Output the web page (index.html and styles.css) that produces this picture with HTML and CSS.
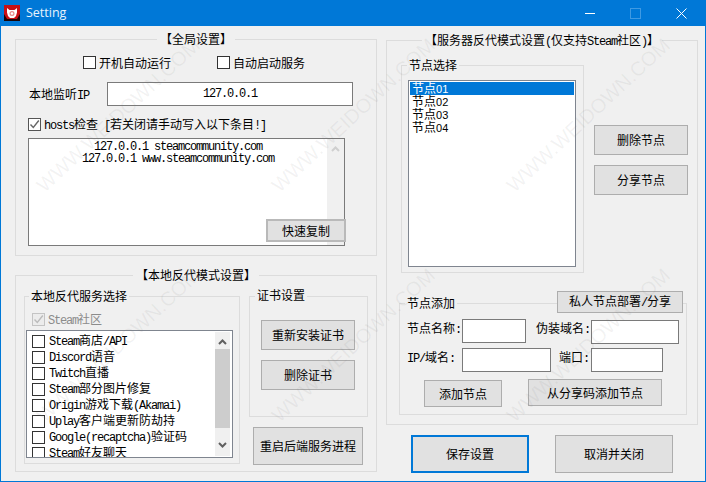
FILE: index.html
```html
<!DOCTYPE html>
<html lang="zh">
<head>
<meta charset="utf-8">
<title>Setting</title>
<link rel="stylesheet" href="styles.css">
</head>
<body>
<div class="window">
  <header class="titlebar">
    <svg class="appicon" viewBox="0 0 16 16" width="16" height="16"><rect width="16" height="16" fill="#c80f14"/><path d="M0 16V9l3 5h10l3-5v7z" fill="#1a0506"/><path d="M3 3l2.500 2h5L13 3v4.500L12 11l-2 2H6l-2-2-1-3.500z" fill="#fff"/><circle cx="8" cy="8.500" r="2.500" fill="#e98a8a"/><circle cx="8" cy="8.500" r="1.200" fill="#fff"/></svg>
    <span class="title">Setting</span>
    <div class="winbtns">
      <svg width="10" height="10" viewBox="0 0 10 10"><path d="M0 5.500h10" stroke="#fff" fill="none"/></svg>
      <svg width="11" height="11" viewBox="0 0 11 11"><rect x=".5" y=".5" width="10" height="10" stroke="#3f9ae3" fill="none"/></svg>
      <svg width="11" height="11" viewBox="0 0 11 11"><path d="M.5.500l10 10M10.500.500l-10 10" stroke="#fff" fill="none"/></svg>
    </div>
  </header>

  <main class="content">
    <div class="col col-left">
      <section class="group g-global">
        <h2 class="legend legend-c">【全局设置】</h2>
        <div class="row-checks">
          <label class="check w134"><span class="box"></span>开机自动运行</label>
          <label class="check"><span class="box"></span>自动启动服务</label>
        </div>
        <div class="row-ip">
          <span class="ip-label">本地监听<span class="m">IP</span></span>
          <input class="field field-ip m" value="127.0.0.1">
        </div>
        <label class="check row-hosts"><span class="box"><svg viewBox="0 0 11 11" width="11" height="11"><path d="M1.500 5.500l2.800 3L9.800 1.500" stroke="#666" stroke-width="1.400" fill="none"/></svg></span><span><span class="m">hosts</span>检查<span class="m"> [</span>若关闭请手动写入以下条目<span class="m">!]</span></span></label>
        <div class="hosts">
          <div class="hosts-text m">127.0.0.1 steamcommunity.com<br>127.0.0.1 www.steamcommunity.com</div>
          <div class="hosts-scroll"><svg width="9" height="6" viewBox="0 0 9 6"><path d="M1 5l3.500-3.500L8 5" stroke="#cfcfcf" stroke-width="2" fill="none"/></svg></div>
          <button class="btn btn-copy">快速复制</button>
        </div>
      </section>

      <section class="group g-local">
        <h2 class="legend legend-c">【本地反代模式设置】</h2>
        <div class="local-inner">
          <section class="group g-services">
            <h3 class="legend legend-svc">本地反代服务选择</h3>
            <label class="check row-steam disabled"><span class="box"><svg viewBox="0 0 11 11" width="11" height="11"><path d="M1.500 5.500l2.800 3L9.800 1.500" stroke="#bbb" stroke-width="1.400" fill="none"/></svg></span><span><span class="m">Steam</span>社区</span></label>
            <div class="svc-list">
              <ul class="svc-items">
                <li class="svc"><span class="box"></span><span><span class="m">Steam</span>商店<span class="m">/API</span></span></li>
                <li class="svc"><span class="box"></span><span><span class="m">Discord</span>语音</span></li>
                <li class="svc"><span class="box"></span><span><span class="m">Twitch</span>直播</span></li>
                <li class="svc"><span class="box"></span><span><span class="m">Steam</span>部分图片修复</span></li>
                <li class="svc"><span class="box"></span><span><span class="m">Origin</span>游戏下载<span class="m">(Akamai)</span></span></li>
                <li class="svc"><span class="box"></span><span><span class="m">Uplay</span>客户端更新防劫持</span></li>
                <li class="svc"><span class="box"></span><span><span class="m">Google(recaptcha)</span>验证码</span></li>
                <li class="svc"><span class="box"></span><span><span class="m">Steam</span>好友聊天</span></li>
              </ul>
              <div class="svc-scroll">
                <div class="arrow-up"><svg width="9" height="6" viewBox="0 0 9 6"><path d="M1 5l3.500-3.500L8 5" stroke="#606060" stroke-width="2" fill="none"/></svg></div>
                <div class="thumb"></div>
                <div class="arrow-down"><svg width="9" height="6" viewBox="0 0 9 6"><path d="M1 1l3.500 3.500L8 1" stroke="#606060" stroke-width="2" fill="none"/></svg></div>
              </div>
            </div>
          </section>
          <div class="cert-col">
            <section class="group g-cert">
              <h3 class="legend legend-cert">证书设置</h3>
              <button class="btn btn-cert first">重新安装证书</button>
              <button class="btn btn-cert">删除证书</button>
            </section>
            <button class="btn btn-restart">重启后端服务进程</button>
          </div>
        </div>
      </section>
    </div>

    <div class="col col-right">
      <section class="group g-server">
        <h2 class="legend legend-c">【服务器反代模式设置<span class="m">(</span>仅支持<span class="m">Steam</span>社区<span class="m">)</span>】</h2>
        <div class="server-top">
          <section class="group g-nodes">
            <h3 class="legend legend-nodes">节点选择</h3>
            <ul class="node-list">
              <li class="node selected">节点<span class="s">01</span></li>
              <li class="node">节点<span class="s">02</span></li>
              <li class="node">节点<span class="s">03</span></li>
              <li class="node">节点<span class="s">04</span></li>
            </ul>
          </section>
          <div class="node-btns">
            <button class="btn btn-node">删除节点</button>
            <button class="btn btn-node">分享节点</button>
          </div>
        </div>
        <section class="group g-add">
          <h3 class="legend legend-add">节点添加</h3>
          <button class="btn btn-private">私人节点部署<span class="m">/</span>分享</button>
          <div class="add-row first">
            <span class="add-label w55">节点名称<span class="m">:</span></span>
            <input class="field w64">
            <span class="add-label w55 ml10">伪装域名<span class="m">:</span></span>
            <input class="field w88 down1">
          </div>
          <div class="add-row second">
            <span class="add-label w55"><span class="m">IP/</span>域名<span class="m">:</span></span>
            <input class="field w89">
            <span class="add-label w32 ml8">端口<span class="m">:</span></span>
            <input class="field w72">
          </div>
          <div class="add-btns">
            <button class="btn btn-add">添加节点</button>
            <button class="btn btn-share">从分享码添加节点</button>
          </div>
        </section>
      </section>
      <div class="actions">
        <button class="btn btn-main btn-primary">保存设置</button>
        <button class="btn btn-main">取消并关闭</button>
      </div>
    </div>
  </main>

  <div class="watermarks" aria-hidden="true">
    <span>WWW.WEIDOWN.COM</span><span>WWW.WEIDOWN.COM</span><span>WWW.WEIDOWN.COM</span>
    <span>WWW.WEIDOWN.COM</span><span>WWW.WEIDOWN.COM</span><span>WWW.WEIDOWN.COM</span>
  </div>
</div>
</body>
</html>
```
FILE: styles.css
```css
* { box-sizing: border-box; }
html, body { margin: 0; padding: 0; }
body {
  width: 706px; height: 482px; overflow: hidden;
  font: 12px/14px "Noto Sans CJK SC", "Noto Sans", sans-serif;
  color: #000;
}
ul { list-style: none; margin: 0; padding: 0; }
h2, h3 { margin: 0; font-weight: 400; font-size: 12px; }

.window {
  position: relative;
  width: 706px; height: 482px;
  background: #f0f0f0;
  border: 1px solid #0078d7; border-top: 0;
  display: flex; flex-direction: column;
  overflow: hidden;
}
.titlebar {
  flex: none; height: 26px; margin: 0 -1px;
  background: #0078d7; color: #fff;
  display: flex; align-items: center; padding-left: 4px;
}
.appicon { display: block; flex: none; }
.title { font-family: "Open Sans", sans-serif; font-size: 12.500px; margin-left: 6px; color: #e8f3fc; }
.winbtns { margin-left: auto; margin-right: 19px; display: flex; align-items: center; gap: 35px; }
.winbtns svg { display: block; }

.m { font-family: "Liberation Mono", monospace; font-size: 12px; letter-spacing: -1.2px; }
.s { font-family: "Liberation Sans", sans-serif; font-size: 11px; }

.content { flex: 1; display: flex; padding: 13px 0 0 14px; gap: 9px; }
.col { flex: none; }
.col-left { width: 362px; }
.col-right { width: 312px; padding-top: 1px; }

.group { position: relative; border: 1px solid #dcdcdc; }
.legend { position: absolute; background: #f0f0f0; white-space: nowrap; line-height: 14px; }
.legend-c { top: -8px; left: 50%; transform: translateX(-50%); padding: 0 3px; }
.legend-svc { top: -8px; left: 4px; padding: 0 2px; }
.legend-cert { top: -9px; left: 5px; padding: 0 2px; }
.legend-nodes { top: -8px; left: 5px; padding: 0 2px; }
.legend-add { top: -8px; left: 5px; padding: 0 2px; }

.box { flex: none; display: block; width: 13px; height: 13px; border: 1px solid #333; background: #fff; }
.box svg { display: block; }
.check { display: flex; align-items: center; gap: 3px; height: 13px; white-space: nowrap; }
.disabled { color: #8c8c8c; }
.disabled .box { border-color: #c4c4c4; background: #ececec; }

.field {
  display: block; flex: none; height: 24px; padding: 0;
  border: 1px solid #7a7a7a; background: #fff; outline: 0; border-radius: 0;
}
.btn {
  display: block; flex: none; padding: 0; border: 1px solid #adadad; border-radius: 0;
  background: #e1e1e1; color: #000; white-space: nowrap;
  font: 12px/14px "Noto Sans CJK SC", "Noto Sans", sans-serif;
}

.g-global { height: 217px; margin-bottom: 19px; }
.row-checks { display: flex; margin: 16px 0 0 67px; }
.w134 { width: 134px; }
.row-ip { display: flex; align-items: center; margin: 13px 0 0 13px; }
.ip-label { width: 78px; margin-top: 1px; }
.field-ip { width: 246px; text-align: center; }
.row-hosts { margin: 12px 0 0 12px; }
.row-hosts .box { border-color: #555; }
.hosts {
  position: relative; display: flex;
  width: 317px; height: 108px; margin: 7px 0 0 12px;
  border: 1px solid #7a7a7a; background: #fff;
}
.hosts-text { flex: 1; text-align: center; line-height: 12px; padding-top: 2px; white-space: pre; }
.hosts-scroll { flex: none; width: 17px; background: #f0f0f0; text-align: center; padding-top: 7px; }
.hosts-scroll svg { display: block; margin: 0 auto; }
.btn-copy { position: absolute; right: -2px; bottom: 3px; width: 80px; height: 23px; border-width: 2px; border-color: #b9b9b9; }

.g-local { height: 197px; }
.local-inner { display: flex; align-items: flex-start; }
.g-services { width: 216px; height: 168px; margin: 20px 0 0 8px; flex: none; }
.row-steam { margin: 16px 0 0 7px; }
.svc-list {
  display: flex; width: 207px; height: 128px; margin: 4px 0 0 1px;
  border: 1px solid #7f858f; background: #fff;
}
.svc-items { flex: 1; overflow: hidden; padding: 2px 0 0 5px; }
.svc { display: flex; align-items: center; gap: 4px; height: 16px; white-space: nowrap; }
.svc-scroll { flex: none; display: flex; flex-direction: column; width: 15px; margin: 1px 2px 1px 0; background: #f0f0f0; }
.arrow-up { height: 17px; padding-top: 7px; }
.arrow-down { flex: 1; padding-top: 14px; }
.arrow-up svg, .arrow-down svg { display: block; margin: 0 auto; }
.thumb { height: 79px; background: #cdcdcd; }

.cert-col { flex: none; margin: 20px 0 0 9px; }
.g-cert { width: 119px; height: 121px; }
.btn-cert { width: 94px; height: 30px; margin: 10px 0 0 11px; }
.btn-cert.first { margin-top: 23px; }
.btn-restart { width: 110px; height: 38px; margin: 10px 0 0 4px; }

.g-server { height: 385px; }
.server-top { display: flex; align-items: flex-start; margin: 24px 0 0 14px; }
.g-nodes { width: 183px; height: 208px; flex: none; }
.node-list {
  width: 168px; height: 187px; margin: 14px 0 0 6px; padding: 1px;
  border: 1px solid #7f858f; background: #fff;
}
.node { height: 13px; line-height: 11px; padding-left: 2px; }
.selected { background: #0078d7; color: #fff; }
.node-btns { flex: none; margin: 60px 0 0 10px; }
.btn-node { width: 94px; height: 30px; margin-bottom: 10px; }

.g-add { width: 288px; height: 112px; margin: 30px 0 0 12px; }
.btn-private { position: absolute; top: -13px; right: 3px; width: 126px; height: 22px; }
.add-row { display: flex; align-items: flex-start; padding-left: 7px; }
.add-row.first { margin-top: 15px; }
.add-row.second { margin-top: 4px; }
.add-label { line-height: 18px; white-space: nowrap; flex: none; }
.w55 { width: 55px; }
.w32 { width: 32px; }
.ml10 { margin-left: 10px; }
.ml8 { margin-left: 8px; }
.w64 { width: 64px; }
.w72 { width: 72px; }
.w88 { width: 88px; }
.w89 { width: 89px; }
.down1 { margin-top: 1px; }
.add-btns { display: flex; align-items: flex-start; gap: 26px; padding-left: 24px; margin-top: 7px; }
.btn-add { width: 78px; height: 27px; margin-top: 1px; }
.btn-share { width: 134px; height: 27px; }

.actions { display: flex; gap: 26px; margin: 10px 0 0 25px; }
.btn-main { width: 118px; height: 38px; }
.btn-primary { border: 2px solid #0078d7; }

.watermarks {
  position: absolute; inset: 0; pointer-events: none;
  display: grid; grid-template-columns: 235px 235px 235px; grid-template-rows: 230px 230px;
  place-items: center;
  font: 20px/24px "Liberation Sans", sans-serif; color: rgba(120,120,120,.09);
}
.watermarks span { transform: rotate(-43deg); white-space: nowrap; }
```
